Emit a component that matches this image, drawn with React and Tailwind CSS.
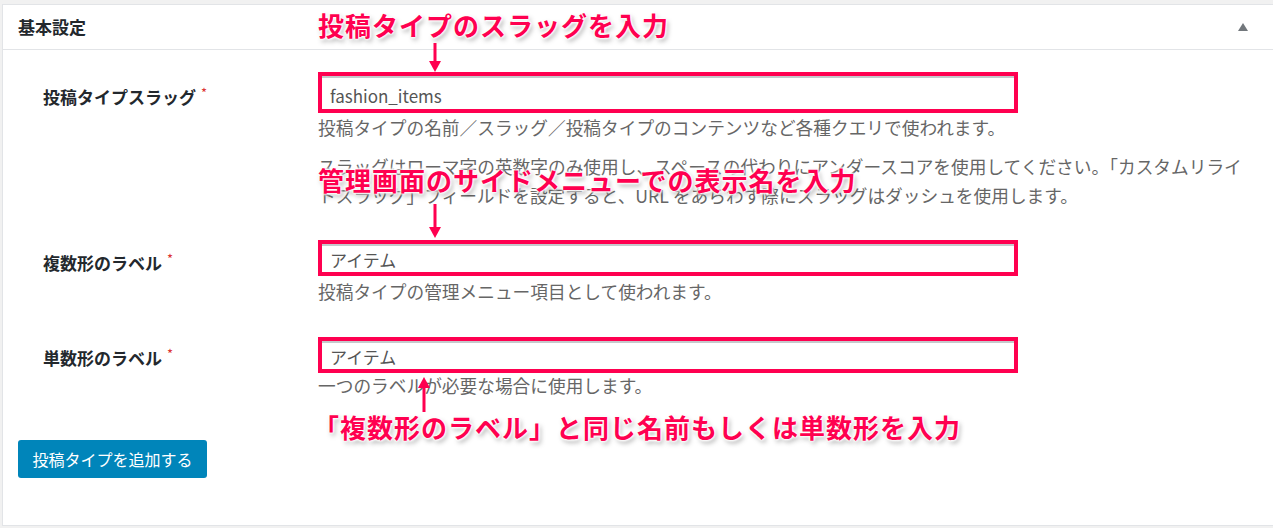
import React from "react";

const note =
  "absolute whitespace-nowrap text-[26px] font-bold leading-[30px] tracking-[1px] text-[#ff0050] [text-shadow:0_0_2px_#fff,0_0_2px_#fff,0_0_3px_#fff,0_0_3px_#fff,0_0_4px_#fff,2px_3px_5px_rgba(0,0,0,0.35)]";

const Arrow = ({ className, length, up }) => (
  <svg
    className={className}
    width="14"
    height={length}
    viewBox={`0 0 14 ${length}`}
  >
    {up ? (
      <>
        <rect x="5.5" y="9" width="3" height={length - 9} fill="#ff0050" />
        <polygon points="1,11 13,11 7,0" fill="#ff0050" />
      </>
    ) : (
      <>
        <rect x="5.5" y="0" width="3" height={length - 9} fill="#ff0050" />
        <polygon
          points={`1,${length - 11} 13,${length - 11} 7,${length}`}
          fill="#ff0050"
        />
      </>
    )}
  </svg>
);

const Label = ({ text, pt }) => (
  <div
    className={`w-[315px] shrink-0 pl-[40px] text-[17px] font-bold leading-[26px] text-[#23282d] ${pt}`}
  >
    {text}
    <span className="ml-[5px] align-top text-[13px] font-normal leading-[18px] text-[#dc3232]">
      *
    </span>
  </div>
);

const Field = ({ value, h, pt }) => (
  <div
    className={`flex w-[700px] border-4 border-[#ff0050] bg-white ${h}`}
  >
    <div
      className={`flex w-full items-center border-t-2 border-[#c5c9cc] pl-[8px] text-[17px] text-[#555] ${pt}`}
    >
      {value}
    </div>
  </div>
);

export default function App() {
  return (
    <div className="relative h-[528px] w-full overflow-hidden bg-[#f1f1f1] pl-[2px] pt-[4px] font-['Noto_Sans_CJK_JP','Noto_Sans',sans-serif]">
      <div className="h-[522px] border border-r-0 border-[#e2e4e7] bg-white">
        <div className="flex h-[45px] items-center justify-between border-b border-[#e2e4e7] pl-[15px] pr-[25px]">
          <span className="text-[17px] font-bold text-[#23282d]">基本設定</span>
          <svg width="10" height="8" viewBox="0 0 10 8">
            <polygon points="0,8 10,8 5,0" fill="#72777c" />
          </svg>
        </div>

        <div className="flex flex-col">
          <div className="mt-[22px] flex">
            <Label text="投稿タイプスラッグ" pt="pt-[12px]" />
            <div className="flex flex-col">
              <Field value="fashion_items" h="h-[41px]" pt="pt-[4px]" />
              <p className="mt-[2px] text-[17.7px] leading-[24px] text-[#666]">
                投稿タイプの名前／スラッグ／投稿タイプのコンテンツなど各種クエリで使われます。
              </p>
              <p className="mt-[13px] whitespace-nowrap text-[17.7px] leading-[29px] text-[#666]">
                スラッグはローマ字の英数字のみ使用し、スペースの代わりにアンダースコアを使用してください。「カスタムリライ
                <br />
                トスラッグ」フィールドを設定すると、URL をあらわす際にスラッグはダッシュを使用します。
              </p>
            </div>
          </div>

          <div className="mt-[30px] flex">
            <Label text="複数形のラベル" pt="pt-[10px]" />
            <div className="flex flex-col">
              <Field value="アイテム" h="h-[36px]" pt="pt-[2px]" />
              <p className="mt-[3px] text-[17.7px] leading-[24px] text-[#666]">
                投稿タイプの管理メニュー項目として使われます。
              </p>
            </div>
          </div>

          <div className="mt-[34px] flex">
            <Label text="単数形のラベル" pt="pt-[8px]" />
            <div className="flex flex-col">
              <Field value="アイテム" h="h-[36px]" pt="pt-[2px]" />
              <p className="text-[17.7px] leading-[24px] text-[#666]">
                一つのラベルが必要な場合に使用します。
              </p>
            </div>
          </div>

          <div className="ml-[15px] mt-[43px]">
            <button className="h-[38px] w-[189px] rounded-[3px] bg-[#0085ba] text-[16px] text-white">
              投稿タイプを追加する
            </button>
          </div>
        </div>
      </div>

      <div className={`${note} left-[318px] top-[10px]`}>
        投稿タイプのスラッグを入力
      </div>
      <Arrow className="absolute left-[428px] top-[43px]" length={29} />

      <div className={`${note} left-[318px] top-[165px]`}>
        管理画面のサイドメニューでの表示名を入力
      </div>
      <Arrow className="absolute left-[428px] top-[204px]" length={34} />

      <Arrow className="absolute left-[417px] top-[377px]" length={35} up />
      <div className={`${note} left-[313px] top-[412px]`}>
        「複数形のラベル」と同じ名前もしくは単数形を入力
      </div>
    </div>
  );
}
